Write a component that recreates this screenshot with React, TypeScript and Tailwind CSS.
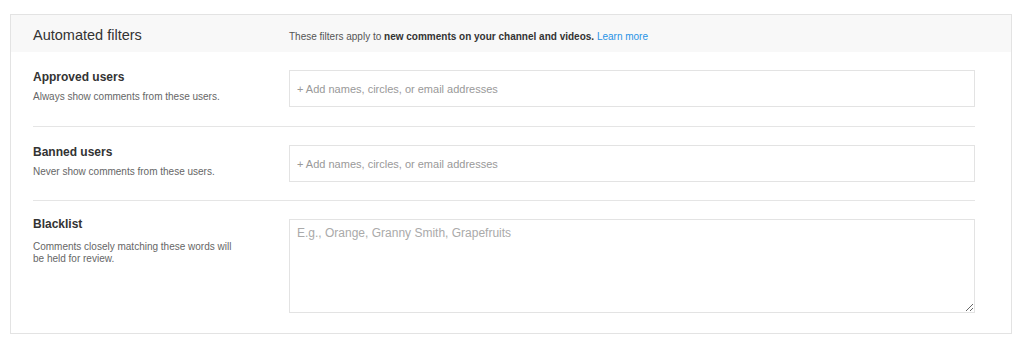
const font = { fontFamily: '"Liberation Sans", Arial, sans-serif' };

function Row({
  label,
  desc,
  children,
  pb,
  border = true,
  labelShift = 'mt-0',
  descGap = 'mt-[7px]',
}: {
  label: string;
  desc: React.ReactNode;
  children: React.ReactNode;
  pb: string;
  border?: boolean;
  labelShift?: string;
  descGap?: string;
}) {
  return (
    <div className={`flex pt-[18px] ${pb} ${border ? 'border-b border-[#e5e5e5]' : ''}`}>
      <div className={`w-[256px] shrink-0 ${labelShift}`}>
        <div className="text-[12px] leading-[14px] font-bold text-[#333]">{label}</div>
        <div className={`${descGap} text-[10px] leading-[12px] text-[#666]`}>{desc}</div>
      </div>
      <div className="flex-1">{children}</div>
    </div>
  );
}

function TagInput() {
  return (
    <input
      type="text"
      placeholder="+ Add names, circles, or email addresses"
      className="block w-full h-[37px] border border-[#e3e3e3] bg-white px-[7px] text-[11px] text-[#333] placeholder:text-[#999] outline-none"
      style={font}
    />
  );
}

export default function App() {
  return (
    <div className="bg-white w-[1024px] h-[347px] pt-[14px] pl-[10px]" style={font}>
      <div className="w-[1002px] border border-[#e3e3e3] bg-white">
        {/* header band */}
        <div className="flex items-baseline h-[37px] bg-[#f8f8f8] pl-[22px] pt-[12px]">
          <div className="w-[256px] shrink-0 text-[14.5px] leading-[17px] text-[#333]">Automated filters</div>
          <div className="text-[10px] leading-[12px] text-[#555]">
            These filters apply to{' '}
            <span className="font-bold text-[#333]">new comments on your channel and videos.</span>{' '}
            <a className="text-[#2793e6]" href="#">Learn more</a>
          </div>
        </div>

        <div className="pl-[22px] pr-[36px]">
          <Row label="Approved users" desc="Always show comments from these users." pb="pb-[19px]">
            <TagInput />
          </Row>
          <Row label="Banned users" desc="Never show comments from these users." pb="pb-[18px]">
            <TagInput />
          </Row>
          <Row
            label="Blacklist"
            desc={
              <>
                Comments closely matching these words will
                <br />
                be held for review.
              </>
            }
            pb="pb-[20px]"
            border={false}
            labelShift="-mt-[2px]"
            descGap="mt-[10px]"
          >
            <textarea
              placeholder="E.g., Orange, Granny Smith, Grapefruits"
              className="block w-full h-[94px] border border-[#e3e3e3] bg-white px-[7px] pt-[6px] text-[12px] leading-[15px] text-[#333] placeholder:text-[#aaa] outline-none"
              style={font}
            />
          </Row>
        </div>
      </div>
    </div>
  );
}
